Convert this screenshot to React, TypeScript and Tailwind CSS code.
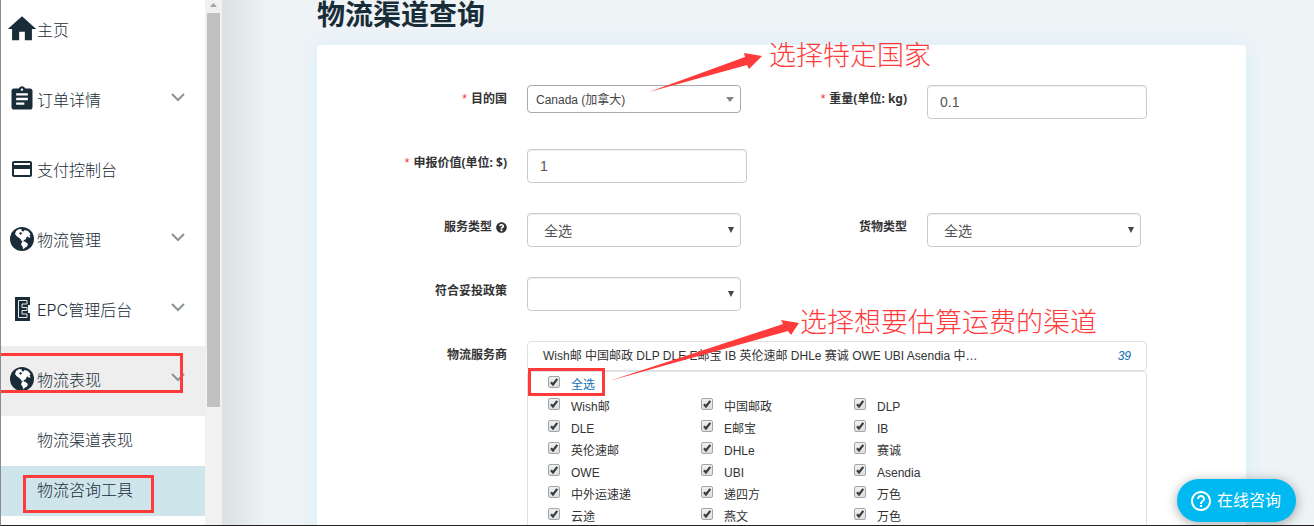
import { ReactNode, useState } from 'react';
import { MdAssignment, MdHelpOutline, MdHome, MdPayment } from 'react-icons/md';
import { FaQuestionCircle } from 'react-icons/fa';

const providers = [
  'Wish邮', '中国邮政', 'DLP',
  'DLE', 'E邮宝', 'IB',
  '英伦速邮', 'DHLe', '赛诚',
  'OWE', 'UBI', 'Asendia',
  '中外运速递', '递四方', '万色',
  '云途', '燕文', '万色',
];

const EpcIcon = () => (
  <svg width="16" height="24" viewBox="0 0 16 24" className="shrink-0" fill="#192d38">
    <path d="M1 0h15v8h-2v8h2v8H1z" />
    <path d="M13 3.500H4.500v17H13M13 3.500v3.500H8v3.500h5v3H8V17h5v3.500" fill="none" stroke="#e8eaea" strokeWidth="1" />
    <path d="M14 8h2v8h-2z" fill="#fff" />
  </svg>
);

const GlobeIcon = () => (
  <svg width="24" height="24" viewBox="0 0 24 24" className="shrink-0">
    <circle cx="12" cy="12" r="12" fill="#192d38" />
    <path d="M6 4l3-2 3 .500-.500 1.500 2 .500 1-1.500 3.500 1 2.500 3-1 1.500 1 1.500-1.500 1-1-1.500-1.500.500-.500 2-2.500 1.500.500 1.500-2-.500-1.500-2.500L6.500 9 5 7z" fill="#fff" />
    <path d="M12 15l3-.500 3 2.500-1 2.500-2.500 1.500-1 1.500-1-3-1.500-2z" fill="#fff" />
    <path d="M9 6l2-1 1 1.500-1.500 1.500z" fill="#192d38" />
  </svg>
);

const menu: { label: string; icon: ReactNode; expandable?: boolean; active?: boolean }[] = [
  { label: '主页', icon: <MdHome size={34} className="shrink-0" /> },
  { label: '订单详情', icon: <MdAssignment size={28} className="shrink-0" />, expandable: true },
  { label: '支付控制台', icon: <MdPayment size={24} className="shrink-0" /> },
  { label: '物流管理', icon: <GlobeIcon />, expandable: true },
  { label: 'EPC管理后台', icon: <EpcIcon />, expandable: true },
  { label: '物流表现', icon: <GlobeIcon />, expandable: true, active: true },
];

const Sidebar = () => (
  <aside className="flex w-[221px] shrink-0 bg-white">
    <nav className="-mt-1 flex-1 font-[Inter,'Noto_Sans_CJK_SC',sans-serif] text-base font-light text-[#192d38]">
      {menu.map((item) => (
        <a
          key={item.label}
          href="#"
          className={`flex h-[70px] items-center gap-px pr-5 pb-0.5 pl-[7px] ${item.active ? 'bg-[#eeeeee]' : ''}`}
        >
          <span className="flex w-7 justify-center pb-0.5">{item.icon}</span>
          <span className="flex-1">{item.label}</span>
          {item.expandable && (
            <svg width="14" height="10" viewBox="0 0 14 10" className="mb-1.5" fill="none" stroke="#8b9497" strokeWidth="2">
              <path d="M1 2l6 6 6-6" />
            </svg>
          )}
        </a>
      ))}
      <a href="#" className="flex h-[50px] items-center pb-0.5 pl-9">物流渠道表现</a>
      <a href="#" className="flex h-[50px] items-center bg-[#cfe5ec] pb-0.5 pl-9">物流咨询工具</a>
    </nav>
    {/* Scrollbar */}
    <div className="flex w-[17px] flex-col items-center bg-[#f1f1f0]">
      <svg width="13" height="13" viewBox="0 0 13 13" className="shrink-0">
        <path d="M3 7l3.500-4L10 7z" fill="#a3a3a3" />
      </svg>
      <div className="h-3/4 w-[13px] bg-[#c1c1c1]" />
    </div>
  </aside>
);

const Label = ({ id, required, children }: { id: string; required?: boolean; children: ReactNode }) => (
  <label
    htmlFor={id}
    className="flex h-7 items-center justify-end gap-1 pr-5 font-['Noto_Sans','Noto_Sans_CJK_SC',sans-serif] text-xs font-bold whitespace-nowrap text-[#333333]"
  >
    {required && <span className="font-['Liberation_Sans',sans-serif] font-normal text-[#ff2a2a]">*</span>}
    {children}
  </label>
);

const TextField = ({ id, value }: { id: string; value: string }) => (
  <input
    id={id}
    defaultValue={value}
    className="h-[34px] w-full rounded border border-[#cccccc] px-3 text-sm text-[#555555] shadow-[inset_0_1px_1px_rgba(0,0,0,0.075)]"
  />
);

const SelectField = ({ id, value }: { id: string; value: string }) => (
  <div className="relative mr-[6px]">
    <select
      id={id}
      className="h-[34px] w-full appearance-none rounded border border-[#cccccc] bg-white px-4 pt-px text-sm text-[#555555] shadow-[inset_0_1px_1px_rgba(0,0,0,0.075)]"
    >
      <option>{value}</option>
    </select>
    <svg width="6" height="6" viewBox="0 0 6 6" className="pointer-events-none absolute top-[14px] right-[7px]">
      <path d="M0 0h6L3 6z" fill="#444444" />
    </svg>
  </div>
);

const CheckRow = ({ id, label, link }: { id: string; label: string; link?: boolean }) => {
  const [checked, setChecked] = useState(true);
  return (
    <div className="flex h-[22px] items-center gap-[11px]">
      <span className="relative mb-1 h-3 w-3">
        <input
          id={id}
          type="checkbox"
          checked={checked}
          onChange={() => setChecked(!checked)}
          className="block h-3 w-3 appearance-none rounded-xs border border-[#a3a6a8] bg-linear-to-b from-[#f0f1f1] to-[#dcdedf]"
        />
        {checked && (
          <svg width="12" height="12" viewBox="0 0 12 12" className="pointer-events-none absolute top-0 left-0" fill="none">
            <path d="M3 6.200l2 2.300 4.300-5.600" stroke="#3a3d40" strokeWidth="2.200" />
          </svg>
        )}
      </span>
      <label htmlFor={id} className={link ? 'pt-0.5 text-[#0f6fb5]' : 'pt-0.5'}>{label}</label>
    </div>
  );
};

const ProviderPicker = () => (
  <div className="text-xs text-[#333333]">
    <button
      id="provider"
      type="button"
      className="flex h-[30px] w-full items-center justify-between rounded border border-[#dfe1e6] bg-white px-[15px] text-left"
    >
      <span>Wish邮 中国邮政 DLP DLE E邮宝 IB 英伦速邮 DHLe 赛诚 OWE UBI Asendia 中…</span>
      <span className="text-[#0f6fb5] italic">39</span>
    </button>
    <div className="rounded border border-[#dfe1e6] pt-px pb-5 pl-5">
      <CheckRow id="provider-all" label="全选" link />
      <div className="grid grid-cols-[repeat(3,153px)]">
        {providers.map((name, index) => (
          <CheckRow key={index} id={`provider-${index}`} label={name} />
        ))}
      </div>
    </div>
  </div>
);

const QueryForm = () => (
  <form className="grid grid-cols-[21fr_22fr_18fr_22fr] gap-y-[30px] rounded bg-white pt-10 pr-[99px] shadow-[0_0_20px_#d6eefa]">
    <Label id="country" required>目的国</Label>
    <div className="relative mr-[6px]">
      <select
        id="country"
        className="block h-7 w-full appearance-none rounded border border-[#aaaaaa] bg-white px-2 pt-px text-xs text-[#444444]"
      >
        <option>Canada (加拿大)</option>
      </select>
      <svg width="8" height="5" viewBox="0 0 8 5" className="pointer-events-none absolute top-3 right-[7px]">
        <path d="M0 0h8L4 5z" fill="#808688" />
      </svg>
    </div>
    <Label id="weight" required>重量(单位: kg)</Label>
    <TextField id="weight" value="0.1" />

    <Label id="declared" required>申报价值(单位: $)</Label>
    <TextField id="declared" value="1" />

    <div className="col-start-1">
      <Label id="service">服务类型 <FaQuestionCircle size={11} /></Label>
    </div>
    <SelectField id="service" value="全选" />
    <Label id="cargo">货物类型</Label>
    <SelectField id="cargo" value="全选" />

    <Label id="policy">符合妥投政策</Label>
    <SelectField id="policy" value="" />

    <div className="col-start-1">
      <Label id="provider">物流服务商</Label>
    </div>
    <div className="col-span-3">
      <ProviderPicker />
    </div>
  </form>
);

/* Red tutorial marks drawn on top of the page */
const Annotations = () => (
  <div className="pointer-events-none absolute inset-y-0 -left-px font-['Noto_Sans_CJK_SC',sans-serif] text-[27px] leading-8 font-light whitespace-nowrap text-[#ff3a3a]">
    <div className="absolute top-[353px] left-0 h-10 w-[183px] border-[3px] border-l-0 border-[#ff3a3a]" />
    <div className="absolute top-[475px] left-[23px] h-[38px] w-[131px] border-[3px] border-[#ff3a3a]" />
    <div className="absolute top-[368px] left-[528px] h-7 w-[77px] border-[3px] border-[#ff3a3a]" />
    <svg width="1314" height="526" viewBox="0 0 1314 526" className="absolute top-0 left-0 max-w-none" fill="#ff3a3a">
      <path d="M649 92L745 57l-1-4 18 3-13 13-2-4z" />
      <path d="M609 381L783 324l-2-4 18 3-8 12-3-4z" />
    </svg>
    <span className="absolute top-[38px] left-[769px]">选择特定国家</span>
    <span className="absolute top-[305px] left-[800px]">选择想要估算运费的渠道</span>
  </div>
);

export default function App() {
  return (
    <div className="relative flex h-screen overflow-hidden border-b border-l border-b-[#222222] border-l-[#8c8c8c] bg-[#eef3f6] font-['Liberation_Sans','Noto_Sans_CJK_SC',sans-serif]">
      <Sidebar />
      <main className="min-w-0 flex-1 bg-linear-to-r from-[#dae2e3] to-[#eef3f6] to-[45px] pr-[68px] pl-[95px]">
        <h1 className="h-[45px] text-[28px] leading-8 font-bold text-[#192d38]">物流渠道查询</h1>
        <QueryForm />
      </main>
      <button
        type="button"
        className="absolute right-[18px] bottom-[3px] flex h-[43px] w-[119px] items-center gap-1 rounded-full bg-[#00b9f1] pl-3 text-base whitespace-nowrap text-white shadow-[0_2px_12px_rgba(0,0,0,0.35)]"
      >
        <MdHelpOutline size={24} className="shrink-0" />
        在线咨询
      </button>
      <Annotations />
    </div>
  );
}
